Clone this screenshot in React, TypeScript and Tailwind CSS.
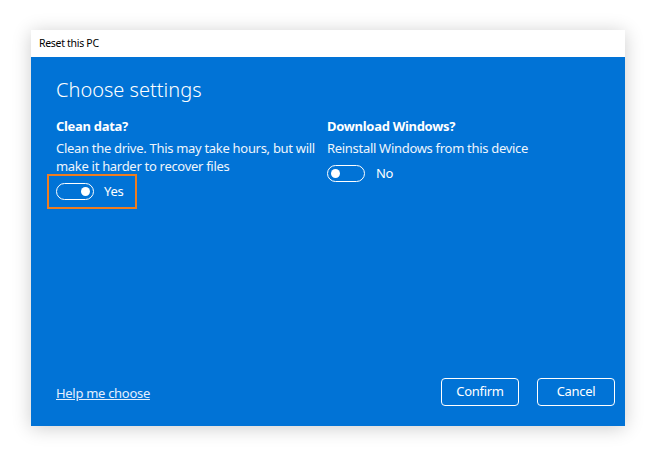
import React from 'react';

function Toggle({ on }: { on: boolean }) {
  return (
    <div
      className={`w-[38px] h-[17px] rounded-full border-[1.5px] border-white flex items-center px-[3px] ${
        on ? 'justify-end' : 'justify-start'
      }`}
    >
      <span className="w-[9px] h-[9px] rounded-full bg-white" />
    </div>
  );
}

export default function App() {
  return (
    <div
      className="w-[660px] h-[462px] bg-white pt-[30px] pl-[31px]"
      style={{ fontFamily: '"Noto Sans", "Open Sans", sans-serif' }}
    >
      <div className="w-[594px] h-[396px] flex flex-col shadow-[0_2px_18px_rgba(0,0,0,0.2)]">
        <div className="h-[27px] bg-white flex items-center pl-[8px] text-[10.5px] tracking-[-0.3px] text-black">
          Reset this PC
        </div>
        <div className="flex-1 bg-[#0173d6] flex flex-col text-white tracking-[-0.3px]">
          <div className="flex-1 pl-[25px] pt-[19px]">
            <h1 className="text-[20px] leading-[28px] font-light tracking-normal">Choose settings</h1>
            <div className="grid grid-cols-[271px_1fr] mt-[13px]">
              <div>
                <p className="text-[13px] leading-[18px] font-bold">Clean data?</p>
                <p className="text-[13px] leading-[18px] mt-[4px] text-[#eef5fc]">
                  Clean the drive. This may take hours, but will make it harder to recover files
                </p>
                <div className="-ml-[9px] -mt-[1px] w-[90px] h-[35px] border-2 border-[#f07d1f] flex items-center pl-[7px] gap-[10px]">
                  <Toggle on />
                  <span className="text-[13px]">Yes</span>
                </div>
              </div>
              <div>
                <p className="text-[13px] leading-[18px] font-bold">Download Windows?</p>
                <p className="text-[13px] leading-[18px] mt-[4px] text-[#eef5fc]">
                  Reinstall Windows from this device
                </p>
                <div className="mt-[7px] flex items-center gap-[11px]">
                  <Toggle on={false} />
                  <span className="text-[13px]">No</span>
                </div>
              </div>
            </div>
          </div>
          <div className="flex items-center justify-between pl-[25px] pr-[10px] pb-[20px]">
            <a className="text-[13px] underline text-[#e4efff] mt-[3px]">Help me choose</a>
            <div className="flex gap-[18px]">
              <button className="w-[78px] h-[28px] border-[1.5px] border-white rounded-[4px] text-[13px]">
                Confirm
              </button>
              <button className="w-[78px] h-[28px] border-[1.5px] border-white rounded-[4px] text-[13px]">
                Cancel
              </button>
            </div>
          </div>
        </div>
      </div>
    </div>
  );
}
